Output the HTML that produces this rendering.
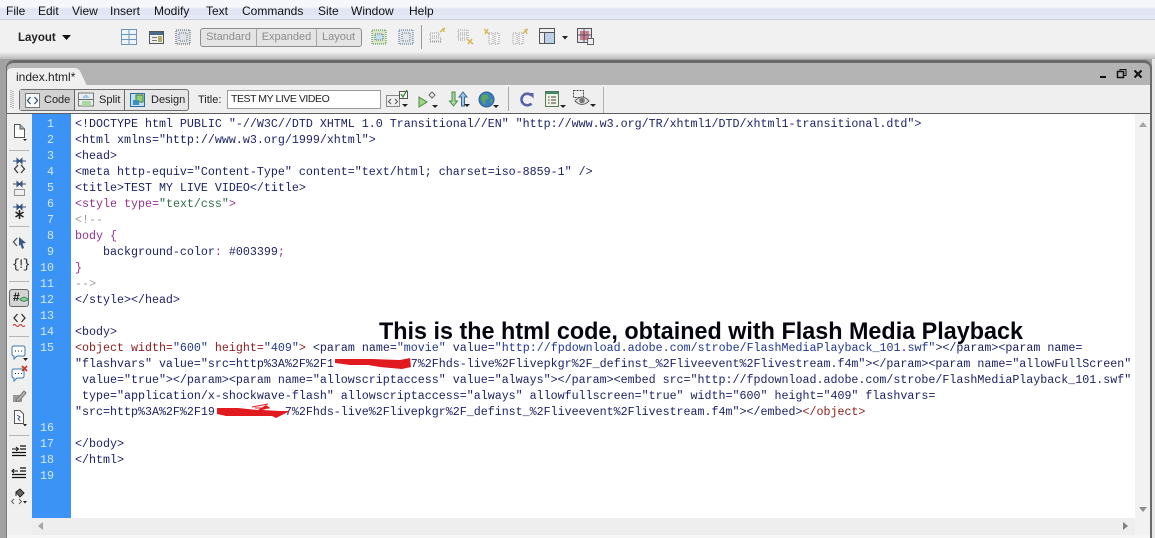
<!DOCTYPE html>
<html><head><meta charset="utf-8">
<style>
html,body{margin:0;padding:0}
body{width:1155px;height:538px;overflow:hidden;position:relative;background:#efefef;font-family:"Liberation Sans",sans-serif;color:#111}
.a{position:absolute}
.m{position:absolute;top:4px;font-size:12px;line-height:14px;color:#111}
.seg{position:absolute;font-size:11px;line-height:16px;color:#8d8d8d;text-align:center;top:29px;height:16px}
pre{margin:0;position:absolute;left:75px;font:11.67px/16px "Liberation Mono",monospace;color:#1b1f63;white-space:pre}
.n{position:absolute;left:32px;width:22px;text-align:right;font:11.67px/16px "Liberation Mono",monospace;color:#d5e8ff}
.p{color:#93328f}.g{color:#2f6f4a}.c{color:#9a9a9a}.r{color:#8b1c1c}.b{color:#22398c}
.tb{position:absolute;font-size:11px;line-height:14px;color:#222}
svg{position:absolute;overflow:visible}
</style></head><body>

<!-- menu -->
<div class="a" style="left:0;top:0;width:1155px;height:20px;background:linear-gradient(#f6f7fb 0,#f6f7fb 7px,#dfe4f3 9px,#e6e9f6 19px)"></div>
<div class="a" style="left:0;top:19px;width:1155px;height:1px;background:#c9cdd6"></div>
<span class="m" style="left:6px">File</span><span class="m" style="left:38px">Edit</span><span class="m" style="left:72px">View</span><span class="m" style="left:110px">Insert</span><span class="m" style="left:154px">Modify</span><span class="m" style="left:206px">Text</span><span class="m" style="left:242px">Commands</span><span class="m" style="left:318px">Site</span><span class="m" style="left:351px">Window</span><span class="m" style="left:409px">Help</span>

<!-- insert toolbar -->
<div class="a" style="left:0;top:20px;width:1155px;height:34px;background:#f1f1f1"></div>
<div class="a" style="left:18px;top:31px;font-size:11.500px;font-weight:bold;line-height:14px;color:#222">Layout</div>
<svg style="left:62px;top:35px" width="10" height="6"><path d="M0 0H9L4.500 5Z" fill="#111"/></svg>

<svg style="left:121px;top:29px" width="16" height="16"><rect x=".5" y=".5" width="15" height="15" fill="#eef4fb" stroke="#6f96b8"/><path d="M1 5.500H15M1 10.500H15M8 1V15" stroke="#6f96b8"/></svg>
<svg style="left:149px;top:31px" width="15" height="13"><rect x=".5" y=".5" width="14" height="12" fill="#eee" stroke="#555"/><rect x="1" y="1" width="13" height="3" fill="#4b6a8a"/><path d="M3 6.500H8M3 9.500H8" stroke="#777"/><rect x="9" y="5" width="4" height="6" fill="#b5a96a"/></svg>
<svg style="left:175px;top:29px" width="16" height="16"><rect x="1" y="1" width="14" height="14" fill="#dde3e8" stroke="#555" stroke-dasharray="1 1"/><rect x="4" y="4" width="8" height="8" fill="none" stroke="#777" stroke-dasharray="1 1"/></svg>

<div class="a" style="left:200px;top:28px;width:160px;height:17px;border:1px solid #8e8e8e;border-radius:3px;background:#e4e4e4"></div>
<div class="a" style="left:256px;top:29px;width:1px;height:17px;background:#a5a5a5"></div>
<div class="a" style="left:316px;top:29px;width:1px;height:17px;background:#a5a5a5"></div>
<span class="seg" style="left:201px;width:55px">Standard</span><span class="seg" style="left:257px;width:59px">Expanded</span><span class="seg" style="left:317px;width:43px">Layout</span>

<svg style="left:371px;top:29px" width="16" height="16"><rect x="1" y="1" width="14" height="14" fill="#d8e6c8" stroke="#4b8a3c" stroke-dasharray="1 1"/><rect x="4" y="5" width="8" height="6" fill="#bfe0f0" stroke="#666" stroke-dasharray="1 1"/></svg>
<svg style="left:398px;top:29px" width="16" height="16"><rect x="1" y="1" width="14" height="14" fill="#dfe6ee" stroke="#46648a" stroke-dasharray="1 1"/><rect x="4" y="4" width="8" height="8" fill="none" stroke="#777" stroke-dasharray="1 1"/></svg>
<div class="a" style="left:421px;top:25px;width:1px;height:24px;background:#999"></div>
<svg style="left:429px;top:27px" width="18" height="18"><path d="M1 6H10V9H1ZM1 11H12V14H1ZM1 15H12" fill="none" stroke="#999" stroke-dasharray="1 1"/><path d="M11 5L16 1M14 1L15 5" stroke="#d6b856" stroke-width="1.500"/></svg>
<svg style="left:457px;top:28px" width="18" height="18"><path d="M1 2H11V5H1ZM1 7H11V10H1ZM1 12H8" fill="none" stroke="#999" stroke-dasharray="1 1"/><path d="M10 11L16 16M15 11L11 16" stroke="#d6b856" stroke-width="1.500"/></svg>
<svg style="left:483px;top:28px" width="18" height="18"><path d="M6 5H10V16H6ZM12 5H16V16H12Z" fill="none" stroke="#999" stroke-dasharray="1 1"/><path d="M1 1L6 6M5 1L2 6" stroke="#d6b856" stroke-width="1.500"/></svg>
<svg style="left:511px;top:28px" width="18" height="18"><path d="M2 5H6V16H2ZM8 5H12V16H8Z" fill="none" stroke="#999" stroke-dasharray="1 1"/><path d="M12 5L17 1M14 1L16 6" stroke="#d6b856" stroke-width="1.500"/></svg>
<svg style="left:539px;top:28px" width="17" height="17"><rect x=".5" y=".5" width="15" height="15" fill="#bcd0ea" stroke="#555"/><rect x="1" y="1" width="14" height="3" fill="#eee"/><rect x="1" y="4" width="4" height="11" fill="#eee"/><path d="M5.500 4V15M1 4.500H15" stroke="#555"/></svg>
<svg style="left:562px;top:36px" width="6" height="4"><path d="M0 0H6L3 3.500Z" fill="#222"/></svg>
<svg style="left:577px;top:28px" width="17" height="17"><rect x=".5" y=".5" width="14" height="14" fill="#dfe4ea" stroke="#555"/><rect x="3" y="3" width="9" height="9" fill="#d07c8e"/><path d="M7 1V14M1 7H14" stroke="#556"/><rect x="10.500" y="10.500" width="6" height="6" fill="#eee" stroke="#666"/></svg>

<!-- frame -->
<div class="a" style="left:0;top:52px;width:1155px;height:7px;background:linear-gradient(#efefef,#bcbcbc)"></div>
<div class="a" style="left:0;top:59px;width:1155px;height:479px;background:#a2a2a2"></div>
<div class="a" style="left:1152px;top:59px;width:3px;height:479px;background:#e8e8e8"></div>
<div class="a" style="left:6px;top:60px;width:1146px;height:478px;background:#b4b4b4;border:solid #6a6a6a;border-width:3px 2px 0 1px;border-radius:8px 8px 0 0;box-sizing:border-box"></div>

<!-- tab -->
<svg style="left:7px;top:68px" width="82" height="18"><path d="M0 18V5Q0 0 5 0H68Q72 0 74 5L80 18Z" fill="#f0f0f0"/></svg>
<div class="a" style="left:16px;top:70px;font-size:12px;line-height:15px;color:#222">index.html*</div>

<!-- window controls -->
<svg style="left:1100px;top:68px" width="50" height="14"><path d="M0 9H6" stroke="#111" stroke-width="2"/><rect x="17.500" y="3.500" width="6" height="6" fill="none" stroke="#111" stroke-width="1.500"/><path d="M20 3V1.500H26V7.500H24" fill="none" stroke="#111"/><path d="M34.500 2.500L41.500 9.500M41.500 2.500L34.500 9.500" stroke="#111" stroke-width="2"/></svg>

<!-- doc toolbar -->
<div class="a" style="left:7px;top:85px;width:1143px;height:28px;background:#efefef"></div>
<div class="a" style="left:7px;top:113px;width:1143px;height:1px;background:#5e5e5e"></div>
<svg style="left:10px;top:90px" width="4" height="18"><path d="M1 0V18M3 1V18" stroke="#8b8b8b" stroke-dasharray="1 1"/></svg>

<div class="a" style="left:19px;top:89px;width:168px;height:20px;border:1px solid #6e6e6e;border-radius:3px;background:#e6e6e6"></div>
<div class="a" style="left:20px;top:90px;width:54px;height:20px;background:#d2d2d2;border-right:1px solid #666"></div>
<div class="a" style="left:124px;top:90px;width:1px;height:20px;background:#666"></div>
<svg style="left:25px;top:93px" width="15" height="15"><rect x=".5" y=".5" width="14" height="14" fill="#f8f8f8" stroke="#777"/><path d="M5.500 4L2.500 7.500L5.500 11M9.500 4L12.500 7.500L9.500 11" fill="none" stroke="#36527f" stroke-width="1.300"/></svg>
<span class="tb" style="left:44px;top:93px">Code</span>
<svg style="left:78px;top:92px" width="17" height="16"><path d="M.5 1H15.500V14H.5Z" fill="#e8eef2" stroke="#777"/><path d="M1 7.500H15" stroke="#666"/><path d="M4 6L7 3H9L12 6Z" fill="#9cc7dd"/><rect x="4" y="9" width="9" height="5" fill="#a8d8a0"/></svg>
<span class="tb" style="left:99px;top:93px">Split</span>
<svg style="left:130px;top:92px" width="17" height="16"><rect x=".5" y="1.500" width="14" height="13" fill="#bfe0f4" stroke="#2e6f9c"/><rect x="6" y="3" width="7" height="7" fill="#8fcf7a" stroke="#4a7a3a"/><rect x="3" y="8" width="6" height="5" fill="#3c8fc2"/></svg>
<span class="tb" style="left:151px;top:93px">Design</span>

<span class="tb" style="left:198px;top:93px">Title:</span>
<div class="a" style="left:227px;top:90px;width:152px;height:17px;background:#fff;border:1px solid #9a9a9a"></div>
<span class="tb" style="left:231px;top:92px;font-size:10.500px;letter-spacing:-.45px">TEST MY LIVE VIDEO</span>

<svg style="left:386px;top:90px" width="24" height="19"><rect x=".5" y="5.500" width="13" height="11" fill="#eee" stroke="#888"/><path d="M5 9L2.500 11.500L5 14M9 9L11.500 11.500L9 14" fill="none" stroke="#555"/><rect x="13.500" y="1.500" width="8" height="7" fill="#fff" stroke="#555"/><path d="M15 4L17 7L21 0" fill="none" stroke="#3a8a3a" stroke-width="1.300"/><path d="M16 14H22L19 17Z" fill="#222"/></svg>
<svg style="left:418px;top:91px" width="22" height="18"><path d="M1 6L9 11L1 16Z" fill="#9fd58a" stroke="#4c8a3e"/><path d="M11 4L14 1L17 4L14 7Z" fill="none" stroke="#666"/><path d="M14 14H20L17 17Z" fill="#222"/></svg>
<svg style="left:448px;top:90px" width="22" height="19"><path d="M4 2V11H1.500L5.500 16L9.500 11H7V2Z" fill="#a9dba0" stroke="#4a8a4a"/><path d="M13.500 16V7H11L15 2L19 7H16.500V16Z" fill="#9fc4e6" stroke="#36658f"/><path d="M16 14H22L19 17Z" fill="#222"/></svg>
<svg style="left:478px;top:91px" width="22" height="18"><circle cx="8.500" cy="8.500" r="7.500" fill="#3a7fc0" stroke="#335c8e"/><path d="M4 4L9 3L11 7L7 10L8 14L5 12L3 8ZM12 9L15 8L13 13Z" fill="#5aa65a"/><path d="M15 14H21L18 17Z" fill="#222"/></svg>
<div class="a" style="left:508px;top:87px;width:1px;height:24px;background:#a8a8a8"></div>
<svg style="left:519px;top:92px" width="15" height="15"><path d="M12.500 3.500A5.800 5.800 0 1 0 12.500 11.500" fill="none" stroke="#5a62a8" stroke-width="2.600"/><path d="M9 1H14.500V6.500Z" fill="#5a62a8"/></svg>
<svg style="left:545px;top:91px" width="22" height="18"><rect x=".5" y=".5" width="13" height="15" fill="#eef3e6" stroke="#557a5a"/><rect x="1" y="1" width="12" height="2" fill="#3f8a6e"/><path d="M3 6H4.500M6 6H11M3 9H4.500M6 9H11M3 12H4.500M6 12H11" stroke="#444"/><path d="M15 14H21L18 17Z" fill="#222"/></svg>
<svg style="left:573px;top:90px" width="24" height="20"><rect x=".5" y=".5" width="10" height="7" fill="none" stroke="#444" stroke-dasharray="2 1"/><path d="M2 11Q9 3 16 11Q9 18 2 11Z" fill="#e2e2e2" stroke="#666"/><circle cx="9" cy="10.500" r="2.800" fill="#777"/><path d="M17 14H23L20 17Z" fill="#222"/></svg>
<div class="a" style="left:603px;top:87px;width:1px;height:26px;background:#b0b0b0"></div>

<!-- editor -->
<div class="a" style="left:7px;top:114px;width:25px;height:424px;background:#f0f0f0"></div>
<div class="a" style="left:6px;top:114px;width:1px;height:424px;background:#7e7e7e"></div>
<div class="a" style="left:32px;top:114px;width:1103px;height:404px;background:#fff"></div>
<div class="a" style="left:32px;top:114px;width:39px;height:404px;background:#3a93f5"></div>
<div class="a" style="left:1135px;top:114px;width:15px;height:421px;background:#f2f2f2"></div>
<svg style="left:1139px;top:122px" width="9" height="6"><path d="M0 5H8L4 0Z" fill="#a5a5a5"/></svg>
<svg style="left:1139px;top:507px" width="9" height="6"><path d="M0 0H8L4 5Z" fill="#8f8f8f"/></svg>
<div class="a" style="left:32px;top:518px;width:1103px;height:17px;background:#eeeeee"></div>
<svg style="left:38px;top:522px" width="6" height="9"><path d="M5 0V8L0 4Z" fill="#a5a5a5"/></svg>
<svg style="left:1123px;top:522px" width="6" height="9"><path d="M0 0V8L5 4Z" fill="#808080"/></svg>
<div class="a" style="left:7px;top:535px;width:1143px;height:3px;background:#f6f6f6"></div>

<!-- left icons -->
<div class="a" style="left:9px;top:150px;width:20px;height:1px;background:#b5b5b5"></div>
<div class="a" style="left:9px;top:226px;width:20px;height:1px;background:#b5b5b5"></div>
<div class="a" style="left:9px;top:281px;width:20px;height:1px;background:#b5b5b5"></div>
<div class="a" style="left:9px;top:336px;width:20px;height:1px;background:#b5b5b5"></div>
<div class="a" style="left:9px;top:435px;width:20px;height:1px;background:#b5b5b5"></div>
<div class="a" style="left:9px;top:289px;width:18px;height:16px;background:#d4d4d4;border:1px solid #666;border-radius:3px"></div>

<svg style="left:13px;top:124px" width="15" height="17"><path d="M1.500 .5H7L11.500 5V13.500H1.500Z" fill="#fff" stroke="#555"/><path d="M7 .5V5H11.500" fill="#9ab6d8" stroke="#555"/><path d="M10 15H14L12 17Z" fill="#222"/></svg>
<svg style="left:12px;top:158px" width="15" height="16"><path d="M1 3H5M10 3H14M5 0.500L7.500 3L5 5.500ZM10 0.500L7.500 3L10 5.500Z" fill="#36527f" stroke="#36527f"/><path d="M6 7L2.500 11L6 15M9 7L12.500 11L9 15" fill="none" stroke="#333" stroke-width="1.200"/></svg>
<svg style="left:12px;top:181px" width="15" height="16"><path d="M1 3H5M10 3H14M5 0.500L7.500 3L5 5.500ZM10 0.500L7.500 3L10 5.500Z" fill="#36527f" stroke="#36527f"/><rect x="2.500" y="8.500" width="10" height="6" fill="none" stroke="#333" stroke-dasharray="1 1"/></svg>
<svg style="left:12px;top:204px" width="15" height="16"><path d="M1 3H5M10 3H14M5 0.500L7.500 3L5 5.500ZM10 0.500L7.500 3L10 5.500Z" fill="#36527f" stroke="#36527f"/><path d="M7.500 6V15M3.500 8L11.500 13M11.500 8L3.500 13" stroke="#222" stroke-width="1.500"/></svg>
<svg style="left:13px;top:236px" width="14" height="14"><path d="M4 2L0.500 6L4 10" fill="none" stroke="#555" stroke-width="1.300"/><path d="M6 1L13 7L9.500 7.500L11 12L9 13L7.500 8.500L6 10Z" fill="#35558a"/></svg>
<div class="a" style="left:12px;top:257px;width:16px;font:13px/16px 'Liberation Mono',monospace;color:#222;letter-spacing:-2.500px">{!}</div>
<div class="a" style="left:13px;top:290px;font:bold 12px/14px 'Liberation Sans',sans-serif;color:#111">#</div>
<svg style="left:20px;top:296px" width="8" height="7"><path d="M0 3.500Q4 -1 8 3.500Q4 7 0 3.500Z" fill="#8ccf9a" stroke="#3a8a5a"/></svg>
<svg style="left:12px;top:313px" width="15" height="15"><path d="M5.500 1L2 5L5.500 9M9.500 1L13 5L9.500 9" fill="none" stroke="#333" stroke-width="1.300"/><path d="M1 12.500Q2.500 10.500 4 12.500T7 12.500T10 12.500T13 12.500" fill="none" stroke="#cc2222"/></svg>
<svg style="left:11px;top:345px" width="17" height="17"><path d="M3 1H12Q14 1 14 3V9Q14 11 12 11H6L3 14V11Q1 11 1 9V3Q1 1 3 1Z" fill="#fff" stroke="#3d7bb0"/><path d="M4 6H5M7 6H8M10 6H11" stroke="#222"/><path d="M12 13H17L14.500 16Z" fill="#222"/></svg>
<svg style="left:11px;top:366px" width="17" height="17"><path d="M3 3H11Q13 3 13 5V10Q13 12 11 12H6L3 15V12Q1 12 1 10V5Q1 3 3 3Z" fill="#fff" stroke="#3d7bb0"/><path d="M4 7.500H5M7 7.500H8M10 7.500H11" stroke="#222"/><path d="M11 0L16 5M16 0L11 5" stroke="#cc3322" stroke-width="1.600"/></svg>
<svg style="left:12px;top:389px" width="15" height="15"><path d="M1 6H10V13H1Z" fill="#9a9a9a"/><path d="M5 10L12 2L14 4L7 12L4 12.500Z" fill="#b5b5b5" stroke="#777"/></svg>
<svg style="left:13px;top:410px" width="15" height="17"><path d="M1.500 .5H7L10.500 4V13.500H1.500Z" fill="#fff" stroke="#555"/><path d="M4 5L7 7L5 9L7.500 11" fill="none" stroke="#35558a"/><path d="M10 14H14L12 16.500Z" fill="#222"/></svg>
<svg style="left:12px;top:445px" width="15" height="12"><path d="M0 4H6M4 2L6.500 4L4 6" fill="none" stroke="#111"/><path d="M8 1H14M8 4H14M0 7.500H14M0 10.500H14" stroke="#111" stroke-width="1.300"/></svg>
<svg style="left:12px;top:467px" width="15" height="12"><path d="M6 4H0M2 2L0 4L2 6" fill="none" stroke="#111"/><path d="M8 1H14M8 4H14M0 7.500H14M0 10.500H14" stroke="#111" stroke-width="1.300"/></svg>
<svg style="left:11px;top:488px" width="17" height="17"><path d="M5 4L9 1L13 5L9 9Z" fill="#666" stroke="#222"/><path d="M5 4L5 8" stroke="#222"/><path d="M3 11L0.500 13.500L3 16M8 11L10.500 13.500L8 16" fill="none" stroke="#666"/><path d="M12 13H16L14 15.500Z" fill="#222"/></svg>

<!-- line numbers -->
<div class="n" style="top:116px">1</div><div class="n" style="top:132px">2</div><div class="n" style="top:148px">3</div><div class="n" style="top:164px">4</div><div class="n" style="top:180px">5</div><div class="n" style="top:196px">6</div><div class="n" style="top:212px">7</div><div class="n" style="top:228px">8</div><div class="n" style="top:244px">9</div><div class="n" style="top:260px">10</div><div class="n" style="top:276px">11</div><div class="n" style="top:292px">12</div><div class="n" style="top:308px">13</div><div class="n" style="top:324px">14</div><div class="n" style="top:340px">15</div><div class="n" style="top:420px">16</div><div class="n" style="top:436px">17</div><div class="n" style="top:452px">18</div><div class="n" style="top:468px">19</div>

<!-- code -->
<pre style="top:116px">&lt;!DOCTYPE html PUBLIC "-//W3C//DTD XHTML 1.0 Transitional//EN" "http://www.w3.org/TR/xhtml1/DTD/xhtml1-transitional.dtd"&gt;
&lt;html xmlns="http://www.w3.org/1999/xhtml"&gt;
&lt;head&gt;
&lt;meta http-equiv="Content-Type" content="text/html; charset=iso-8859-1" /&gt;
&lt;title&gt;TEST MY LIVE VIDEO&lt;/title&gt;
<span class="p">&lt;style type=</span><span class="g">"text/css"</span><span class="p">&gt;</span>
<span class="c">&lt;!--</span>
<span class="p">body {</span>
    background-color<span class="p">:</span> #003399<span class="p">;</span>
<span class="p">}</span>
<span class="c">--&gt;</span>
&lt;/style&gt;&lt;/head&gt;

&lt;body&gt;
<span class="r">&lt;object width=</span><span class="b">"600"</span> <span class="r">height=</span><span class="b">"409"</span><span class="r">&gt;</span> &lt;param name=<span class="b">"movie"</span> value=<span class="b">"http://fpdownload.adobe.com/strobe/FlashMediaPlayback_101.swf"</span>&gt;&lt;/param&gt;&lt;param name=
"flashvars" value="src=http%3A%2F%2F1           7%2Fhds-live%2Flivepkgr%2F_definst_%2Fliveevent%2Flivestream.f4m"&gt;&lt;/param&gt;&lt;param name="allowFullScreen"
 value="true"&gt;&lt;/param&gt;&lt;param name="allowscriptaccess" value="always"&gt;&lt;/param&gt;&lt;embed src="http://fpdownload.adobe.com/strobe/FlashMediaPlayback_101.swf"
 type="application/x-shockwave-flash" allowscriptaccess="always" allowfullscreen="true" width="600" height="409" flashvars=
"src=http%3A%2F%2F19          7%2Fhds-live%2Flivepkgr%2F_definst_%2Fliveevent%2Flivestream.f4m"&gt;&lt;/embed&gt;<span class="r">&lt;/object&gt;</span>

&lt;/body&gt;
&lt;/html&gt;
</pre>

<!-- red scribbles -->
<svg style="left:0;top:0" width="1155" height="538"><path d="M335 359H372L400 360L410 358L411 367L402 369L380 367L368 365L350 365L335 363Z" fill="#e01a1f"/><path d="M217 408H238L258 410L266 405L270 408L262 410L280 411L290 411L276 418L272 416L250 416L226 416L217 414Z" fill="#e01a1f"/><path d="M252 407L268 404M255 408H270" stroke="#e01a1f" stroke-width="1"/></svg>

<!-- caption -->
<svg style="left:0;top:0" width="1155" height="538"><text x="379" y="339" font-family="Liberation Sans" font-weight="bold" font-size="24" fill="#05050f" textLength="644" lengthAdjust="spacingAndGlyphs">This is the html code, obtained with Flash Media Playback</text></svg>

</body></html>
